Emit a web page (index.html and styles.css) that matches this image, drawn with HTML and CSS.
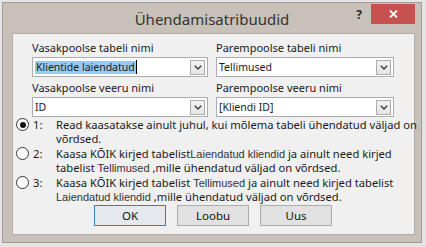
FILE: index.html
```html
<!DOCTYPE html>
<html lang="et">
<head>
<meta charset="utf-8">
<title>Ühendamisatribuudid</title>
<link rel="stylesheet" href="styles.css">
</head>
<body>
<div class="window">
  <div class="titlebar">
    <div class="spacer"></div>
    <div class="title">Ühendamisatribuudid</div>
    <div class="controls">
      <span class="help">?</span>
      <span class="close"><svg width="9" height="8" viewBox="0 0 9 8"><path d="M1 0.5 L8 7.5 M8 0.5 L1 7.5" stroke="#fff" stroke-width="1.8" fill="none"/></svg></span>
    </div>
  </div>
  <div class="client">
    <div class="fields">
      <div class="field">
        <div class="label">Vasakpoolse tabeli nimi</div>
        <div class="combo"><span class="value"><span class="sel">Klientide laiendatud</span><span class="caret"></span></span><span class="drop"><svg width="8" height="5" viewBox="0 0 8 5"><path d="M0.8 0.8 L4 4 L7.2 0.8" stroke="#3a3a3a" stroke-width="1.4" fill="none"/></svg></span></div>
      </div>
      <div class="field">
        <div class="label">Parempoolse tabeli nimi</div>
        <div class="combo"><span class="value">Tellimused</span><span class="drop"><svg width="8" height="5" viewBox="0 0 8 5"><path d="M0.8 0.8 L4 4 L7.2 0.8" stroke="#3a3a3a" stroke-width="1.4" fill="none"/></svg></span></div>
      </div>
      <div class="field">
        <div class="label">Vasakpoolse veeru nimi</div>
        <div class="combo"><span class="value">ID</span><span class="drop"><svg width="8" height="5" viewBox="0 0 8 5"><path d="M0.8 0.8 L4 4 L7.2 0.8" stroke="#3a3a3a" stroke-width="1.4" fill="none"/></svg></span></div>
      </div>
      <div class="field">
        <div class="label">Parempoolse veeru nimi</div>
        <div class="combo"><span class="value">[Kliendi ID]</span><span class="drop"><svg width="8" height="5" viewBox="0 0 8 5"><path d="M0.8 0.8 L4 4 L7.2 0.8" stroke="#3a3a3a" stroke-width="1.4" fill="none"/></svg></span></div>
      </div>
    </div>
    <div class="options">
      <div class="opt">
        <span class="radio checked"></span>
        <span class="num">1:</span>
        <span class="txt">Read kaasatakse ainult juhul, kui mõlema tabeli ühendatud väljad on<br>võrdsed.</span>
      </div>
      <div class="opt">
        <span class="radio"></span>
        <span class="num">2:</span>
        <span class="txt">Kaasa KÕIK kirjed tabelist<span class="tname">Laiendatud kliendid</span> ja ainult need kirjed<br>tabelist <span class="tname">Tellimused</span> ,mille ühendatud väljad on võrdsed.</span>
      </div>
      <div class="opt">
        <span class="radio"></span>
        <span class="num">3:</span>
        <span class="txt">Kaasa KÕIK kirjed tabelist <span class="tname">Tellimused</span> ja ainult need kirjed tabelist<br><span class="tname">Laiendatud kliendid</span> ,mille ühendatud väljad on võrdsed.</span>
      </div>
    </div>
    <div class="buttons">
      <button class="btn default">OK</button>
      <button class="btn">Loobu</button>
      <button class="btn">Uus</button>
    </div>
  </div>
</div>
</body>
</html>
```
FILE: styles.css
```css
html, body {
  margin: 0;
  padding: 0;
}
body {
  width: 426px;
  height: 247px;
  overflow: hidden;
  background: #e4e4e4;
  font-family: "Noto Sans", "Open Sans", sans-serif;
  font-size: 11px;
  color: #1a1a1a;
}
.window {
  margin: 2px 0 0 2px;
  width: 420px;
  height: 241px;
  box-sizing: border-box;
  border: 1px solid #a29c96;
  background: #c8c1b9;
  display: flex;
  flex-direction: column;
}
.titlebar {
  height: 30px;
  flex: none;
  display: grid;
  grid-template-columns: 1fr auto 1fr;
}
.title {
  font-size: 15px;
  color: #333;
  line-height: 30px;
  padding-top: 1px;
}
.controls {
  display: flex;
  justify-content: flex-end;
  align-items: flex-start;
}
.help {
  font-weight: bold;
  font-size: 12px;
  color: #2a2a2a;
  line-height: 14px;
  margin-top: 5px;
  margin-right: 9px;
}
.close {
  width: 44px;
  height: 20px;
  margin-top: 1px;
  margin-right: 6px;
  background: #c75050;
  display: flex;
  align-items: center;
  justify-content: center;
}
.client {
  margin: 0 6px 0 9px;
  height: 202px;
  flex: none;
  box-sizing: border-box;
  border: 1px solid #b3ada6;
  background: #f0f0f0;
}
.fields {
  display: grid;
  grid-template-columns: 176px 178px;
  column-gap: 8px;
  row-gap: 3px;
  margin: 6px 0 0 19px;
}
.label {
  line-height: 15px;
  margin-bottom: 2px;
  white-space: nowrap;
}
.combo {
  height: 20px;
  box-sizing: border-box;
  border: 1px solid #abadb3;
  background: #fff;
  display: flex;
  align-items: center;
}
.value {
  flex: 1;
  padding-left: 2px;
  white-space: nowrap;
  display: flex;
  align-items: center;
  font-size: 10.5px;
}
.sel {
  background: #99c9ef;
  line-height: 13px;
  padding: 0 1px;
}
.caret {
  width: 1px;
  height: 14px;
  background: #000;
}
.drop {
  width: 15px;
  height: 15px;
  box-sizing: border-box;
  border: 1px solid #acacac;
  background: linear-gradient(#f2f2f2, #e5e5e5);
  margin-right: 2px;
  margin-top: 1px;
  display: flex;
  align-items: center;
  justify-content: center;
}
.options {
  margin: 1px 0 0 3px;
  display: flex;
  flex-direction: column;
  gap: 1px;
}
.opt {
  display: flex;
  align-items: flex-start;
  line-height: 14px;
  font-size: 11.2px;
}
.radio {
  width: 13px;
  height: 13px;
  box-sizing: border-box;
  border: 1px solid #333;
  border-radius: 50%;
  background: #fff;
  margin-right: 4px;
  flex: none;
  display: flex;
  align-items: center;
  justify-content: center;
}
.radio.checked::after {
  content: "";
  width: 6px;
  height: 6px;
  border-radius: 50%;
  background: #111;
}
.num {
  width: 23px;
  flex: none;
}
.txt {
  white-space: nowrap;
}
.tname {
  font-family: "Liberation Sans", sans-serif;
  font-size: 11px;
  color: #333;
}
.buttons {
  display: flex;
  gap: 11px;
  margin: 1px 0 0 81px;
}
.btn {
  width: 72px;
  height: 21px;
  box-sizing: border-box;
  border: 1px solid #adadad;
  background: #e1e1e1;
  font-family: "Noto Sans", sans-serif;
  font-size: 11.5px;
  color: #111;
  padding: 0;
}
.btn.default {
  border-color: #3c7fb1;
  background: #e5e9ee;
}
```
